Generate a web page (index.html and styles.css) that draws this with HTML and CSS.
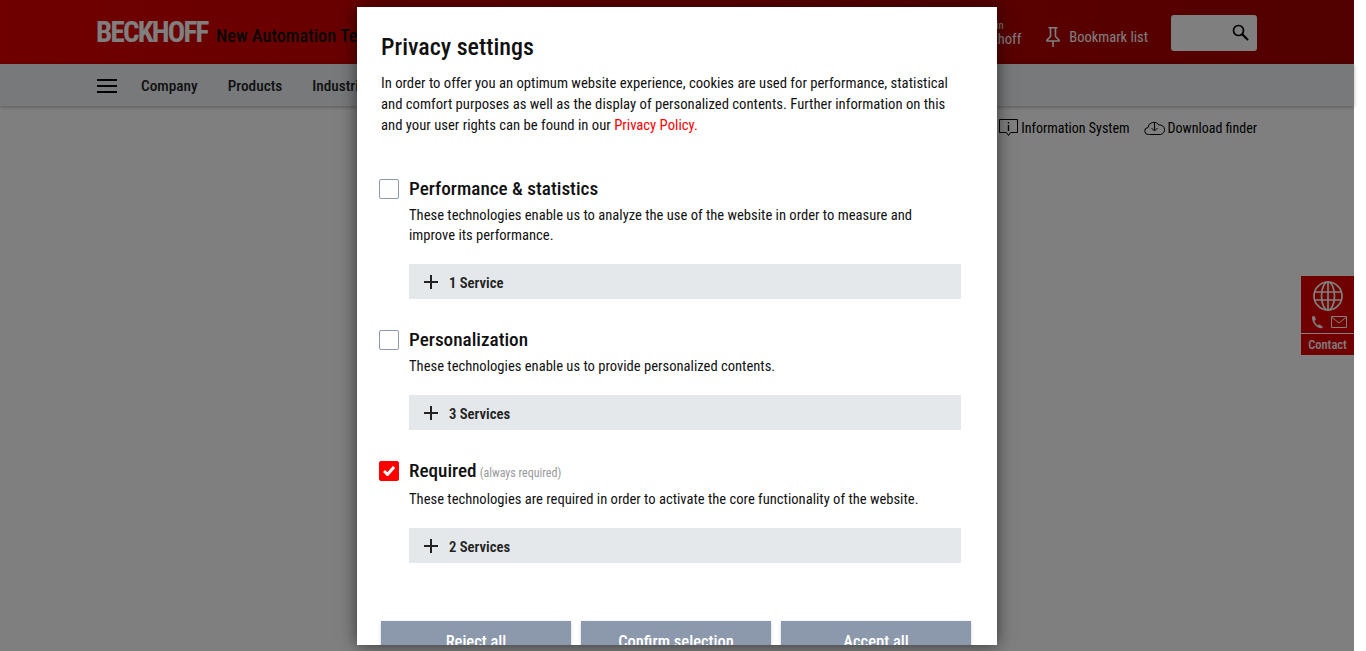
FILE: index.html
```html
<!DOCTYPE html>
<html lang="en">
<head>
<meta charset="utf-8">
<title>Privacy settings</title>
<link rel="stylesheet" href="styles.css">
</head>
<body>
<div class="page">
  <header class="top">
    <div class="brand"><span class="logo">BECKHOFF</span><span class="claim">New Automation Technology</span></div>
    <div class="top-links">
      <span class="mybeck"><small>Please login</small><br>myBeckhoff</span>
      <span class="bookmark">
        <svg class="pin" viewBox="0 0 14 20" width="14" height="20"><path d="M2.500.750h9M4.500 1v8.500L1 13v1h12v-1L9.500 9.500V1M7 14v6" fill="none" stroke="currentColor" stroke-width="1.600"/></svg>
        Bookmark list
      </span>
      <div class="search"><svg viewBox="0 0 17 17" width="17" height="17"><circle cx="6.500" cy="6.500" r="5" fill="none" stroke="currentColor" stroke-width="1.700"/><path d="M10 10 16 16" stroke="currentColor" stroke-width="2.200"/></svg></div>
    </div>
  </header>
  <nav class="nav">
    <div class="burger"><i></i><i></i><i></i></div>
    <a>Company</a><a>Products</a><a>Industries</a>
  </nav>
  <div class="tools">
    <span class="tool"><svg viewBox="0 0 19 18" width="19" height="18"><path d="M.500.500h18v13h-7l-2 3-2-3h-7z" fill="none" stroke="currentColor"/><path d="M9.500 3v1.500M9.500 6v6" stroke="currentColor" stroke-width="1.400"/></svg>Information System</span>
    <span class="tool"><svg viewBox="0 0 21 16" width="21" height="16"><path d="M5.500 14.500H4.500a3.500 3.500 0 0 1-.5-7 6 6 0 0 1 11-2.500 4.700 4.700 0 0 1 1.500 9.500z" fill="none" stroke="currentColor"/><path d="M10.500 3v7.500M7.500 8l3 3 3-3" fill="none" stroke="currentColor"/></svg>Download finder</span>
  </div>
  <aside class="contact">
    <div class="contact-icons">
      <svg class="globe" viewBox="0 0 30 30" width="30" height="30"><g fill="none" stroke="currentColor" stroke-width="1.700"><circle cx="15" cy="15" r="14"/><ellipse cx="15" cy="15" rx="6.500" ry="14"/><path d="M15 1v28M1.500 11h27M1.500 19h27"/></g></svg>
      <div class="contact-row">
        <svg viewBox="0 0 12 13" width="12" height="13"><path d="M1 .5 3.500 0l1.500 3.500-1.500 1.200c.5 2 2 4 3.500 4.800l1-1.300 3.500 2.300V12c-5 1.500-11-5.500-10.500-11.500z" fill="currentColor"/></svg>
        <svg viewBox="0 0 16 12" width="16" height="12"><path d="M.500.500h15v11H.500zM.500 1l7.500 6 7.500-6" fill="none" stroke="currentColor"/></svg>
      </div>
    </div>
    <div class="contact-label">Contact</div>
  </aside>
</div>
<div class="overlay">
  <div class="modal">
    <h1>Privacy settings</h1>
    <p class="intro">In order to offer you an optimum website experience, cookies are used for performance, statistical and comfort purposes as well as the display of personalized contents. Further information on this and your user rights can be found in our <a>Privacy Policy.</a></p>
    <section class="group">
      <div class="head"><span class="box"></span><h2>Performance &amp; statistics</h2></div>
      <p class="desc">These technologies enable us to analyze the use of the website in order to measure and improve its performance.</p>
      <div class="service"><span class="plus"></span>1 Service</div>
    </section>
    <section class="group">
      <div class="head"><span class="box"></span><h2>Personalization</h2></div>
      <p class="desc">These technologies enable us to provide personalized contents.</p>
      <div class="service"><span class="plus"></span>3 Services</div>
    </section>
    <section class="group">
      <div class="head tall"><span class="box on"><svg viewBox="0 0 12 10" width="12" height="10"><path d="M1 5 4.500 8.500 11 1" fill="none" stroke="#fff" stroke-width="3"/></svg></span><h2>Required</h2><small>(always required)</small></div>
      <p class="desc">These technologies are required in order to activate the core functionality of the website.</p>
      <div class="service"><span class="plus"></span>2 Services</div>
    </section>
    <div class="buttons"><button>Reject all</button><button>Confirm selection</button><button>Accept all</button></div>
  </div>
</div>
</body>
</html>
```
FILE: styles.css
```css
* { box-sizing: border-box; }
html, body { margin: 0; height: 100%; background: #fff; overflow: hidden; }
body { font-family: "Roboto Condensed", "Noto Sans", sans-serif; color: #000; position: relative; }
h1, h2, p { margin: 0; }
.page { width: 1354px; height: 651px; background: #fff; position: relative; }
.top { height: 64px; background: linear-gradient(90deg, #e00000, #a40000); padding: 0 97px; display: flex; justify-content: space-between; }
.brand { display: flex; align-items: baseline; padding-top: 15px; }
.logo { font-size: 29px; line-height: 34px; font-weight: 700; letter-spacing: -1.800px; margin-left: -1px; color: #fff; width: 120px; white-space: nowrap; }
.claim { font-size: 18.300px; font-weight: 500; color: #111; }
.top-links { display: flex; align-items: flex-start; color: #fff; font-size: 14.500px; }
.mybeck { line-height: 14px; margin-right: 25px; padding-top: 18px; }
.mybeck small { font-size: 10.500px; }
.bookmark { display: flex; align-items: center; gap: 9px; margin: 27px 23px 0 0; height: 20px; }
.search { width: 86px; height: 36px; background: #fff; border-radius: 3px; margin-top: 15px; color: #000; display: flex; justify-content: flex-end; align-items: center; padding: 0 8px 1px 0; }
.nav { height: 42px; padding: 1px 0 0 97px; background: #eef2f6; box-shadow: 0 1px 4px rgba(0,0,0,.3); display: flex; align-items: center; gap: 30px; font-size: 15.300px; font-weight: 500; color: #222; }
.burger { width: 20px; margin-right: -6px; display: flex; flex-direction: column; gap: 4px; }
.burger i { height: 2px; background: #000; }
.tools { display: flex; justify-content: flex-end; gap: 14px; padding: 12px 97px 0 0; font-size: 14px; }
.tool { display: flex; align-items: center; gap: 3px; height: 20px; }
.contact { position: absolute; right: 0; top: 276px; width: 53px; background: #e00000; color: #fff; }
.contact-icons { height: 58px; border-bottom: 1px solid #fff; display: flex; flex-direction: column; align-items: center; padding-top: 5px; }
.contact-row { display: flex; gap: 8px; margin-top: 5px; padding-left: 3px; }
.contact-label { height: 21px; font-size: 12.500px; font-weight: 500; text-align: center; line-height: 22px; }
.overlay { position: absolute; left: 0; top: 0; width: 1354px; height: 651px; background: rgba(0,0,0,.5); }
.modal { position: absolute; left: 357px; top: 7px; width: 640px; height: 638px; overflow: hidden; background: #fff; padding: 24px 24px 0; box-shadow: 0 0 16px rgba(0,0,0,.6); }
h1 { font-size: 24px; font-weight: 500; line-height: 32px; color: #111; }
.intro { font-size: 14.700px; line-height: 21px; margin: 10px 0 39px; width: 578px; color: #111; }
.intro a { color: #f00; }
.group { padding-left: 28px; margin-bottom: 27px; width: 580px; }
.head { display: flex; align-items: baseline; position: relative; gap: 3px; height: 28px; }
.head.tall { margin-bottom: 4px; }
h2 { font-size: 19.200px; font-weight: 500; line-height: 28px; color: #111; }
.head small { font-size: 12px; color: #999; }
.box { position: absolute; left: -30px; top: 4px; width: 20px; height: 20px; border: 1px solid #8c98ab; border-radius: 2px; background: #fff; }
.box.on { background: #f00; border-color: #f00; display: flex; align-items: center; justify-content: center; }
.desc { font-size: 14.600px; line-height: 20px; margin-top: 2px; color: #111; }
.service { height: 35px; margin-top: 19px; background: #e4e8eb; display: flex; align-items: center; gap: 11px; padding: 2px 0 0 15px; font-size: 14.700px; font-weight: 600; width: 552px; color: #222; }
.plus { width: 14px; height: 14px; margin-top: -2px; background: linear-gradient(#222,#222) center/14px 2px no-repeat, linear-gradient(#222,#222) center/2px 14px no-repeat; }
.buttons { display: flex; gap: 10px; margin-top: 58px; }
.buttons button { width: 190px; height: 40px; border: 0; background: #8c98ab; color: #fff; font-family: inherit; font-size: 16.500px; font-weight: 500; box-shadow: 0 1px 3px rgba(0,0,0,.2); }
```
